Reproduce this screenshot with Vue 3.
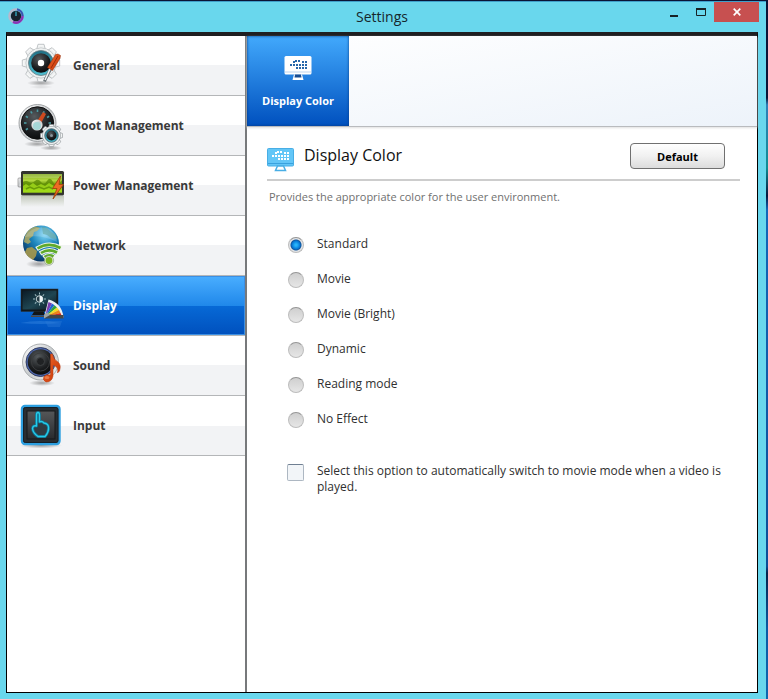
<script setup>
import { ref } from 'vue'

const sections = ['General', 'Boot Management', 'Power Management', 'Network', 'Display', 'Sound', 'Input']
const active = ref('Display')

const modes = ['Standard', 'Movie', 'Movie (Bright)', 'Dynamic', 'Reading mode', 'No Effect']
const mode = ref('Standard')
const autoMovie = ref(false)

const teeth = [0, 45, 90, 135, 180, 225, 270, 315]
const ticks = [-120, -90, -60, -30, 0, 30, 60, 90, 120]

function reset() {
  mode.value = 'Standard'
  autoMovie.value = false
}
</script>

<template>
  <div class="desktop">
    <svg class="defs" width="0" height="0" aria-hidden="true">
      <defs>
        <linearGradient id="metal" x1="0" y1="0" x2="1" y2="1">
          <stop offset="0" stop-color="#fff" /><stop offset=".5" stop-color="#c9ccce" /><stop offset="1" stop-color="#f4f5f5" />
        </linearGradient>
        <linearGradient id="gearfill" x1="0" y1="0" x2="0" y2="1">
          <stop offset="0" stop-color="#fcfcfc" /><stop offset="1" stop-color="#dfe3e4" />
        </linearGradient>
        <linearGradient id="teal" x1="0" y1="0" x2="0" y2="1">
          <stop offset="0" stop-color="#1f6f84" /><stop offset="1" stop-color="#4fc0d2" />
        </linearGradient>
        <radialGradient id="lens" cx=".4" cy=".3" r=".8">
          <stop offset="0" stop-color="#565b5e" /><stop offset=".6" stop-color="#1b1d1f" /><stop offset="1" stop-color="#050607" />
        </radialGradient>
        <radialGradient id="shade">
          <stop offset="0" stop-color="#000" stop-opacity=".35" /><stop offset="1" stop-color="#000" stop-opacity="0" />
        </radialGradient>
        <radialGradient id="ocean" cx=".6" cy=".25" r=".8">
          <stop offset="0" stop-color="#7fd6f5" /><stop offset=".45" stop-color="#1d86bd" /><stop offset="1" stop-color="#07305c" />
        </radialGradient>
        <linearGradient id="acid" x1="0" y1="0" x2="0" y2="1">
          <stop offset="0" stop-color="#7fa51f" /><stop offset=".35" stop-color="#b3d83f" /><stop offset=".55" stop-color="#6fa00c" /><stop offset="1" stop-color="#97d511" />
        </linearGradient>
        <linearGradient id="mirror" x1="0" y1="0" x2="0" y2="1">
          <stop offset="0" stop-color="#7c8766" stop-opacity=".4" /><stop offset="1" stop-color="#8a9a70" stop-opacity="0" />
        </linearGradient>
        <linearGradient id="flame" x1="0" y1="0" x2="1" y2="1">
          <stop offset="0" stop-color="#f26a2a" /><stop offset="1" stop-color="#c23205" />
        </linearGradient>
        <linearGradient id="screen" x1="0" y1="0" x2="1" y2="1">
          <stop offset="0" stop-color="#0b1a24" /><stop offset=".55" stop-color="#1f4652" /><stop offset="1" stop-color="#0c171e" />
        </linearGradient>
        <linearGradient id="pad" x1="0" y1="0" x2="0" y2="1">
          <stop offset="0" stop-color="#555759" /><stop offset="1" stop-color="#292b2e" />
        </linearGradient>
      </defs>
    </svg>

    <div class="window">
      <header class="titlebar">
        <svg class="app-icon" viewBox="0 0 16 16" aria-hidden="true">
          <circle cx="8" cy="8" r="6.6" fill="none" stroke="#b9b8cc" stroke-width="2.4" />
          <path d="M9 1.4A6.6 6.6 0 0 1 14.6 8" fill="none" stroke="#3558b4" stroke-width="2.4" />
          <path d="M14.6 8A6.6 6.6 0 0 1 5 13.9" fill="none" stroke="#8a35b5" stroke-width="2.4" />
          <circle cx="8" cy="8" r="5.2" fill="#17202c" />
          <path d="M8 3.5V8" stroke="#38b9d6" stroke-width="1.2" />
        </svg>
        <h1>Settings</h1>
        <div class="controls">
          <button class="ctl min" aria-label="Minimize">
            <svg width="8" height="10" viewBox="0 0 8 10"><path d="M0 9h8" stroke="#182326" stroke-width="2" /></svg>
          </button>
          <button class="ctl max" aria-label="Maximize">
            <svg width="10" height="8" viewBox="0 0 10 8"><path d="M.5 0V7.5H9.5V0" fill="none" stroke="#182326" /><path d="M0 1H10" stroke="#182326" stroke-width="2" /></svg>
          </button>
          <button class="ctl close" aria-label="Close">
            <svg width="8" height="8" viewBox="0 0 8 8"><path d="M.7.7l6.600 6.600M7.300.7L.7 7.300" stroke="#fff" stroke-width="1.700" /></svg>
          </button>
        </div>
      </header>

      <div class="frame">
        <nav class="sidebar" aria-label="Settings sections">
          <button
            v-for="name in sections"
            :key="name"
            class="item"
            :class="{ active: active === name }"
            @click="active = name"
          >
            <svg class="item-icon" viewBox="14 0 52 58" aria-hidden="true">
              <g v-if="name === 'General'">
                <ellipse cx="41" cy="46" rx="14" ry="3" fill="url(#shade)" />
                <ellipse cx="41" cy="50" rx="12" ry="2" fill="url(#shade)" opacity=".3" />
                <g fill="url(#gearfill)" stroke="#b3b8ba" stroke-width=".8">
                  <path v-for="t in teeth" :key="t" d="M36.500 13L38 7.300H44L45.500 13Z" :transform="`rotate(${t} 41 26)`" />
                  <circle cx="41" cy="26" r="15" />
                </g>
                <circle cx="41" cy="26" r="14.500" fill="#eef1f1" />
                <circle cx="41" cy="26" r="12.500" fill="url(#teal)" stroke="#64767c" stroke-width=".8" />
                <circle cx="41" cy="26" r="9.800" fill="url(#lens)" />
                <circle cx="41" cy="26" r="3.200" fill="#fff" />
                <path d="M51 31L45.500 42L44.500 44.500" stroke="#6f777b" stroke-width="3" fill="none" />
                <path d="M50.500 31L45 43" stroke="#f4f6f7" stroke-width="1.500" />
                <path d="M55.500 17.500Q58 16 60.500 18.500L60 21.500L52.500 33.500L47.500 30.500Z" fill="url(#flame)" stroke="#8e2c0b" stroke-width=".5" />
                <path d="M58 19L51 31" stroke="#8e2407" stroke-width=".8" />
              </g>

              <g v-else-if="name === 'Boot Management'">
                <ellipse cx="37" cy="47" rx="13" ry="3" fill="url(#shade)" />
                <ellipse cx="51" cy="51" rx="11" ry="2.500" fill="url(#shade)" />
                <circle cx="37.500" cy="26" r="18.500" fill="url(#metal)" stroke="#8d9193" stroke-width=".8" />
                <circle cx="37.500" cy="26" r="16.200" fill="url(#lens)" stroke="#111" stroke-width="1" />
                <path v-for="a in ticks" :key="a" d="M37.500 12.500V15" stroke="#4b9ba3" stroke-width="1.600" :transform="`rotate(${a} 37.5 26)`" />
                <path d="M36 26L43 15L46 17L40 28Z" fill="#cf4a1f" />
                <circle cx="37" cy="28" r="5.600" fill="url(#metal)" />
                <circle cx="37" cy="29" r="4" fill="#a5d6d6" />
                <g fill="url(#gearfill)" stroke="#888f92" stroke-width=".6">
                  <path v-for="t in teeth" :key="t" d="M48.500 30.500L49.500 27.500H53.500L54.500 30.500Z" :transform="`rotate(${t} 51.5 38.500)`" />
                  <circle cx="51.500" cy="38.500" r="9" />
                </g>
                <circle cx="51.500" cy="38.500" r="8.500" fill="#eaf0f1" />
                <circle cx="51.500" cy="38.500" r="6.800" fill="url(#teal)" stroke="#4c6067" stroke-width=".8" />
                <circle cx="51.500" cy="38.500" r="5" fill="url(#lens)" />
                <circle cx="51.500" cy="38.500" r="1.500" fill="#89949a" />
              </g>

              <g v-else-if="name === 'Power Management'">
                <rect x="21" y="39" width="43" height="11" fill="url(#mirror)" />
                <rect x="18" y="21" width="4" height="9" rx="1" fill="url(#metal)" stroke="#777" stroke-width=".6" />
                <rect x="21" y="14" width="43" height="24.500" rx="1.500" fill="#34352f" />
                <rect x="23" y="17" width="39" height="18.500" fill="url(#acid)" />
                <path d="M23 25q3-2 6 0t6-1 6 1 6-1 6 1 9-2V32H23Z" fill="#5c8a06" opacity=".75" />
                <path d="M23 29l3-2 3 2 4-3 4 3 4-2 4 2 4-3 5 3 8-2V35.500H23Z" fill="#a4dc1c" opacity=".8" />
                <path d="M26 32l4-2 4 2 5-2 5 2 5-2 4 2" fill="none" stroke="#6a9c07" stroke-width="1.500" />
                <rect x="23" y="17" width="39" height="4" fill="#f2fad0" opacity=".2" />
                <path d="M60.500 19L52.500 31.500H57L53 42L63.500 27.500H59Z" fill="#ef6b24" stroke="#a5440d" stroke-width=".9" />
              </g>

              <g v-else-if="name === 'Network'">
                <ellipse cx="39" cy="47" rx="13" ry="4" fill="url(#shade)" />
                <circle cx="41" cy="26.500" r="18" fill="url(#ocean)" />
                <path d="M25 19Q28 11 36 9.500L40 11L37 14L34 15L33 19L29 22L31 25L28 27L24 25Z" fill="#a8a665" opacity=".9" />
                <path d="M27 31L32 30L37 34L36 39L33 43Q27 40 25 35Z" fill="#a7994c" opacity=".9" />
                <path d="M42 10L47 11L51 15L56 18L57 22L51 21L47 18L43 17Z" fill="#4f9b98" opacity=".7" />
                <path d="M25 20Q32 8 47 11Q57 15 57 25Q42 17 25 20Z" fill="#fff" opacity=".18" />
                <g fill="none">
                  <path d="M36.500 32Q48.500 24 61.500 31M40 36.500Q49 30.500 58 36M43.500 40.500Q49 36.500 54.500 40" stroke="#eef5e8" stroke-width="4.600" />
                  <path d="M37.500 31.500Q48.500 24.500 60.500 31M41 36Q49 31 57 35.500M44.500 40Q49 37 53.500 39.500" stroke="#5faa2b" stroke-width="2.600" />
                </g>
                <circle cx="49" cy="43.500" r="4.600" fill="#e6ecdf" stroke="#78936d" stroke-width=".6" />
                <circle cx="49" cy="43.500" r="3.400" fill="#7bb51f" />
              </g>

              <g v-else-if="name === 'Display'">
                <path d="M20 46Q40 42 60 46Q42 48 20 46Z" fill="#3e8be4" opacity=".4" />
                <path d="M45 44h17l-2 6H48Z" fill="#2e7ad8" opacity=".4" />
                <path d="M35 33h8l2 5H32Z" fill="#121518" />
                <path d="M31 38.500H47V40H31Z" fill="#53483f" />
                <rect x="21" y="12" width="37" height="22.500" fill="#111619" stroke="#29333a" stroke-width=".5" />
                <rect x="22.500" y="13.500" width="34" height="19" fill="url(#screen)" />
                <path v-for="t in teeth" :key="t" d="M39.500 15.500V17.500" stroke="#9fbcc0" stroke-width="1" :transform="`rotate(${t} 39.5 22)`" />
                <circle cx="39.500" cy="22" r="3.300" fill="#243b44" stroke="#d7e4e5" stroke-width=".9" />
                <path d="M39.500 18.700a3.300 3.300 0 0 1 0 6.600Z" fill="#eef5f5" />
                <path d="M44 40.500L48.500 22.500Q62 26 63.500 40.500Z" fill="#edf0f2" />
                <path d="M45 40L48.500 25L52 26.500Z" fill="#7a3cae" />
                <path d="M45 40L52 26.500L54.500 28.200Z" fill="#1d62d2" />
                <path d="M45 40L54.500 28.200L57 30.500Z" fill="#2ea33c" />
                <path d="M45 40L57 30.500L59 33Z" fill="#f2dd20" />
                <path d="M45 40L59 33L60.500 36Z" fill="#ef8613" />
                <path d="M45 40L60.500 36L61.500 38.500Z" fill="#d92718" />
                <path d="M44 37.500L63.500 38V41.500H44Z" fill="#464847" />
                <path d="M44 41.500V38Q47 33 50 38Z" fill="#9ca4a8" />
              </g>

              <g v-else-if="name === 'Sound'">
                <ellipse cx="42" cy="46" rx="13" ry="3" fill="url(#shade)" />
                <circle cx="40.500" cy="25" r="18" fill="url(#metal)" stroke="#999da0" stroke-width=".8" />
                <circle cx="40.500" cy="25" r="14.500" fill="#4f69b0" stroke="#232b48" stroke-width=".8" />
                <circle cx="40.500" cy="25" r="12.800" fill="url(#lens)" />
                <circle cx="40.500" cy="25" r="9" fill="none" stroke="#3b3d3f" stroke-width="1" />
                <circle cx="40.500" cy="24.500" r="4" fill="#202224" stroke="#3d4042" stroke-width="1" />
                <path d="M50.500 17H52.500Q53 22 58 25Q61.500 28 59.500 34L57.500 36Q59 30 53 28V39Q52 45 46 45Q42 43 44 39.500Q46 37 50.500 38Z" fill="url(#flame)" stroke="#bd3c13" stroke-width=".5" />
                <ellipse cx="47" cy="40.500" rx="2.500" ry="1.500" fill="#f99b69" opacity=".6" />
              </g>

              <g v-else>
                <ellipse cx="41" cy="48.500" rx="21" ry="3" fill="url(#shade)" />
                <rect x="22" y="9" width="37.500" height="38" rx="3" fill="#292e32" stroke="#2d9fe0" stroke-width="2.400" />
                <rect x="23.500" y="10.500" width="34.500" height="35" rx="2" fill="none" stroke="#15212a" stroke-width="1" />
                <rect x="27" y="14" width="28" height="28" fill="url(#pad)" stroke="#17191b" stroke-width="1" />
                <path d="M36.500 29V18Q36.500 15.500 38 15.500T39.500 18V25Q42 23.500 44 26Q48 26.500 48.500 30Q49 35 45 39.500H38Q33 36 32.500 31.500Q33 28 36.500 29Z" fill="#303b42" stroke="#146c8b" stroke-width="3" stroke-linejoin="round" />
                <path d="M36.500 29V18Q36.500 15.500 38 15.500T39.500 18V25Q42 23.500 44 26Q48 26.500 48.500 30Q49 35 45 39.500H38Q33 36 32.500 31.500Q33 28 36.500 29Z" fill="none" stroke="#25cbe8" stroke-width="1.400" stroke-linejoin="round" />
              </g>
            </svg>
            <span>{{ name }}</span>
          </button>
        </nav>

        <main class="content">
          <div class="tabs">
            <button class="tab">
              <svg width="28" height="24" viewBox="0 0 28 24" aria-hidden="true">
                <rect x=".5" width="27" height="18.500" rx="1.500" fill="#fff" />
                <path d="M1 16H27" stroke="#bdd3ec" />
                <path d="M10 18.500H18L19.500 24H8.500Z" fill="#fff" />
                <path d="M11 18.500H17L17.500 21.500H10.500Z" fill="#174c91" />
                <path d="M6 8h2v2H6zM9 8h2v2H9zM12 8h2v2h-2zM15 8h2v2h-2zM18 8h2v2h-2zM21 8h2v2h-2zM9 5h2v2H9zM11 4h2v2h-2zM14 4h2v2h-2zM18 5h2v2h-2zM21 5h2v2h-2zM12 11h2v2h-2zM15 11h2v2h-2zM18 11h2v2h-2zM21 11h2v2h-2z" fill="#2867a9" />
              </svg>
              <span>Display Color</span>
            </button>
          </div>

          <section class="panel">
            <div class="panel-head">
              <svg width="28" height="24" viewBox="0 0 28 24" aria-hidden="true">
                <rect x=".5" y=".5" width="26" height="17.500" rx="1" fill="#63c6f7" stroke="#48aee5" />
                <path d="M1 15.500H26" stroke="#39a1dd" />
                <path d="M10.500 18H16.500L18.500 22.500H8.500Z" fill="#fff" stroke="#48aee5" stroke-width="1.500" />
                <path d="M5 7h2v2H5zM8 7h2v2H8zM11 7h2v2h-2zM14 7h2v2h-2zM17 7h2v2h-2zM20 7h2v2h-2zM8 4h2v2H8zM10 3h2v2h-2zM13 3h2v2h-2zM17 4h2v2h-2zM20 4h2v2h-2zM11 10h2v2h-2zM14 10h2v2h-2zM17 10h2v2h-2zM20 10h2v2h-2z" fill="#fff" />
              </svg>
              <h2>Display Color</h2>
              <button class="default" @click="reset">Default</button>
            </div>
            <p class="hint">Provides the appropriate color for the user environment.</p>

            <div class="modes" role="radiogroup" aria-label="Display Color">
              <label v-for="m in modes" :key="m" class="option">
                <input v-model="mode" type="radio" name="mode" :value="m" />
                <span>{{ m }}</span>
              </label>
            </div>

            <label class="auto">
              <input v-model="autoMovie" type="checkbox" />
              <span>Select this option to automatically switch to movie mode when a video is played.</span>
            </label>
          </section>
        </main>
      </div>
    </div>
  </div>
</template>

<style>
body {
  background: #69d7ed;
}
</style>

<style scoped>
* {
  box-sizing: border-box;
}

.desktop {
  display: flex;
  min-height: 100vh;
  padding: 1px 2px 0 0;
  background: linear-gradient(#0a1436 0 14%, #2f7fb8 15%, #0e8d94 24%, #06153c 28%, #1266b8 30%, #0c4d96 81%, #06224a 82%, #0b5aa4 90%, #0f66ae);
  font-family: "Open Sans", "Noto Sans", sans-serif;
  font-size: 12px;
}

.defs {
  position: absolute;
}

button {
  font-family: inherit;
  border: 0;
  padding: 0;
}

.window {
  display: flex;
  flex: 1;
  flex-direction: column;
  padding: 0 8px 6px 6px;
  background: #69d7ed;
  border-top: 1px solid #3f9fca;
}

.titlebar {
  display: grid;
  grid-template-columns: 1fr auto 1fr;
  align-items: start;
  height: 30px;
}

.app-icon {
  width: 16px;
  height: 16px;
  margin: 6px 0 0 2px;
}

h1 {
  margin: 4px 0 0;
  font-size: 14px;
  font-weight: 400;
  line-height: 22px;
  color: #16272c;
}

.controls {
  display: flex;
  justify-content: flex-end;
  margin-right: -1px;
}

.ctl {
  display: flex;
  align-items: center;
  justify-content: center;
  width: 27px;
  height: 20px;
  background: none;
}

.ctl.close {
  width: 45px;
  background: #c75050;
}

.frame {
  display: flex;
  flex: 1;
  border: 1px solid #000;
  border-top: 4px solid #1f1f21;
  background: #fff;
}

.sidebar {
  flex: none;
  width: 240px;
  border-right: 2px solid #77797b;
}

.item {
  display: flex;
  align-items: center;
  gap: 7px;
  width: 100%;
  height: 60px;
  padding-left: 7px;
  border-bottom: 1px solid #b4b6b8;
  background: linear-gradient(#fff 50%, #f2f3f5 50%);
  font-size: 12px;
  font-weight: 700;
  color: #3a3a3a;
  text-align: left;
}

.item.active {
  background: linear-gradient(#4aaeff, #2088ea 50%, #0769d6 51%, #0050bd);
  box-shadow: inset 0 0 0 1px #3c8fe3;
  color: #fff;
}

.item-icon {
  width: 52px;
  height: 58px;
}

.content {
  flex: 1;
  min-width: 0;
}

.tabs {
  display: flex;
  height: 91px;
  border-bottom: 1px solid #b9bbbe;
  background: linear-gradient(170deg, #fff, #edf3fa);
  box-shadow: 0 1px 2px #e0e0e0;
}

.tab {
  display: flex;
  flex-direction: column;
  align-items: center;
  gap: 12px;
  width: 102px;
  padding-top: 20px;
  background: linear-gradient(#42a9fc, #0050be);
  box-shadow: inset 0 0 3px #063b82;
  font-size: 11px;
  font-weight: 700;
  line-height: 18px;
  color: #fff;
  white-space: nowrap;
}

.panel {
  padding: 16px 17px 0 20px;
}

.panel-head {
  display: flex;
  align-items: flex-start;
  height: 38px;
  border-bottom: 2px solid #cdcdcd;
}

.panel-head svg {
  margin-top: 5px;
}

h2 {
  flex: 1;
  margin: 0 0 0 9px;
  font-size: 16px;
  font-weight: 400;
  line-height: 24px;
  color: #111;
}

.default {
  width: 95px;
  height: 26px;
  margin-right: 15px;
  border: 1px solid #707070;
  border-radius: 4px;
  background: linear-gradient(#fefefe, #f1f1f1 50%, #dcdcdc);
  font-size: 11px;
  font-weight: 700;
  color: #000;
}

.hint {
  margin: 7px 0 0 2px;
  font-size: 11px;
  line-height: 18px;
  color: #707070;
}

.modes {
  display: grid;
  gap: 17px;
  margin: 29px 0 0 21px;
}

.option,
.auto {
  display: flex;
  gap: 13px;
  font-size: 12px;
  line-height: 18px;
  color: #303030;
}

input {
  flex: none;
  appearance: none;
  width: 16px;
  height: 16px;
  margin: 2px 0 0;
}

.option input {
  border: 1px solid #bdbdbd;
  border-top-color: #949494;
  border-radius: 50%;
  background: linear-gradient(#cfcfcf, #e6e6e6);
}

.option input:checked {
  background: radial-gradient(circle, #28b4fa 0 1px, #0577d6 4px, #12559b 5px, #e2e4e6 6px);
}

.auto {
  margin: 35px 15px 0 20px;
  line-height: 16px;
}

.auto input {
  width: 17px;
  height: 17px;
  margin-top: 1px;
  border: 1px solid #adb7c2;
  border-top-color: #6f7f92;
  border-radius: 2px;
  background: #f2f5f8;
}

.auto input:checked {
  background: #1b86e0;
}
</style>
